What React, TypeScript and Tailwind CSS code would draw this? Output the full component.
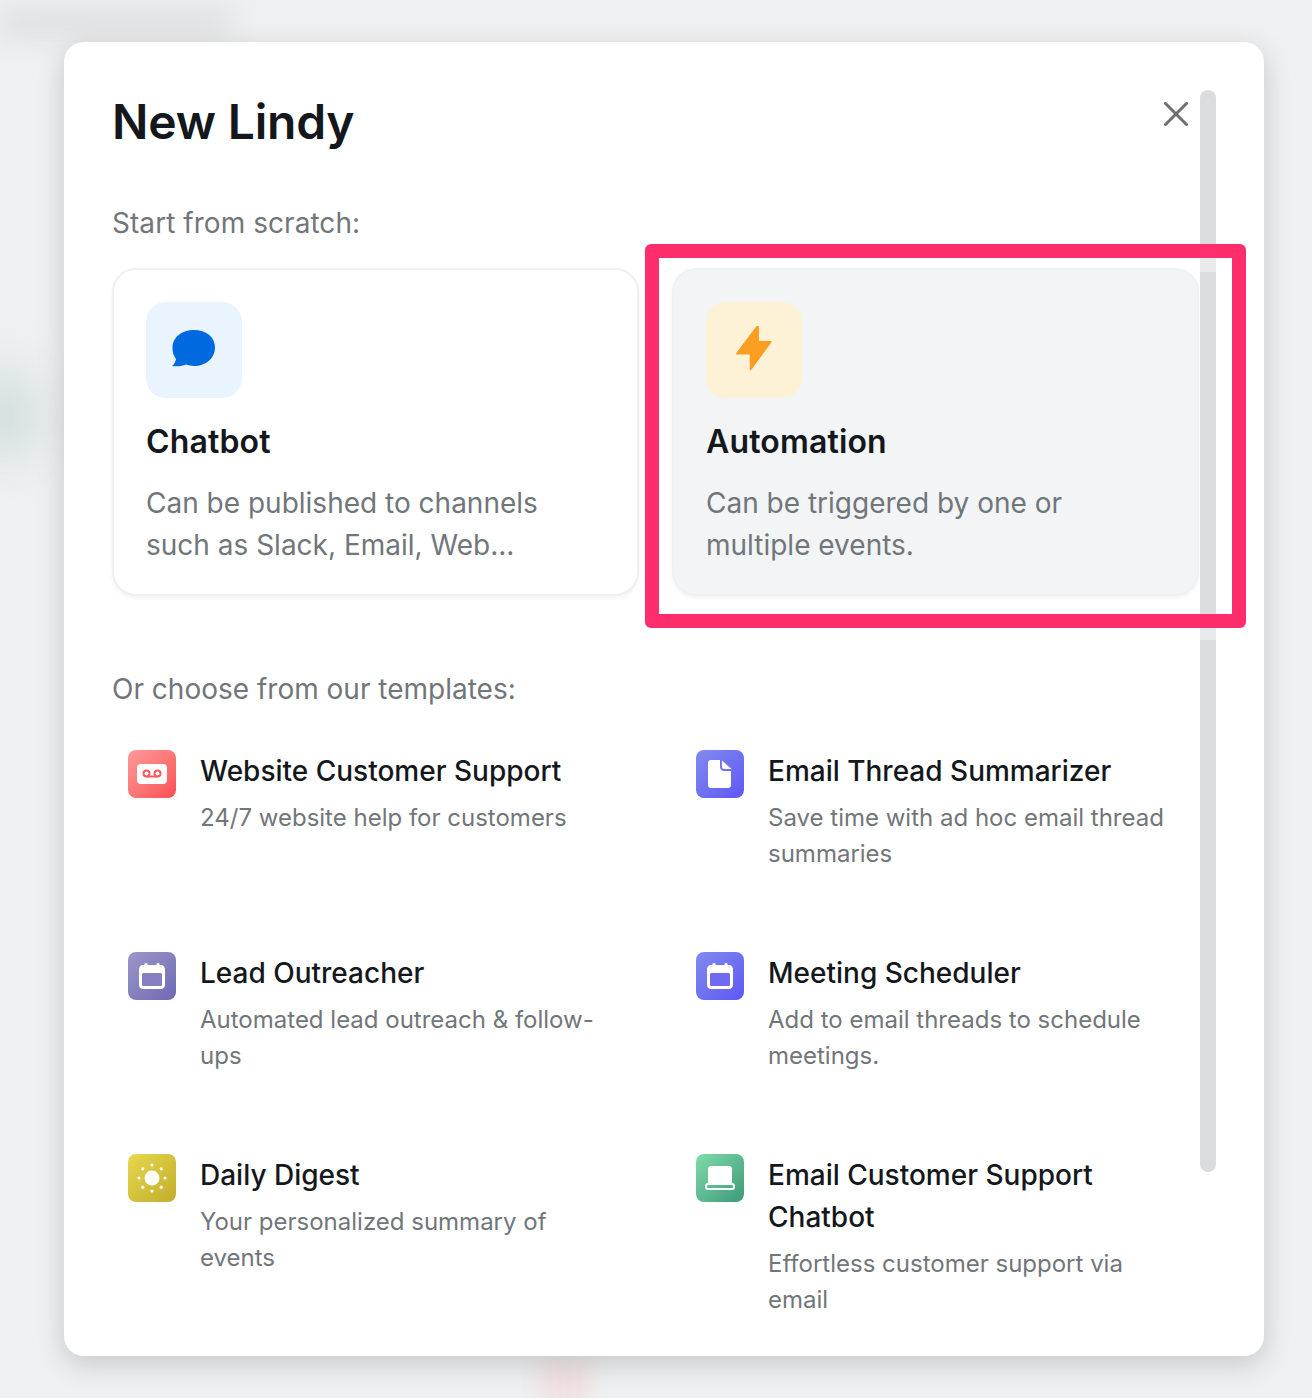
const labelCls = "text-[28px] leading-[42px] text-[#71767a]";
const cardTitleCls = "mt-[22px] text-[32px] font-semibold leading-[44px] tracking-[0.15px] text-[#14181c]";
const iconBoxCls = "flex h-[96px] w-[96px] items-center justify-center rounded-[20px] pb-[4px]";

function VoicemailIcon() {
  return (
    <svg width="30" height="20" viewBox="0 0 30 20">
      <rect width="30" height="20" rx="4" fill="#fff" />
      <g fill="none" stroke="#f8595f" strokeWidth="2">
        <circle cx="9.500" cy="9.500" r="3" />
        <circle cx="20.500" cy="9.500" r="3" />
        <path d="M9.500 12.500h11" />
      </g>
    </svg>
  );
}

function FileIcon() {
  return (
    <svg width="24" height="28" viewBox="0 0 24 28">
      <path d="M3 0h9v7c0 2.200 1.800 4 4 4h7v14c0 1.700-1.300 3-3 3H3c-1.700 0-3-1.300-3-3V3c0-1.700 1.300-3 3-3z" fill="#fff" />
      <path d="M14 .5 23.500 9H16c-1.100 0-2-.9-2-2z" fill="#fff" />
    </svg>
  );
}

function CalendarIcon({ inner }: { inner: string }) {
  return (
    <svg width="26" height="26" viewBox="0 0 26 26">
      <path d="M7 0c1 0 1.500.6 1.700 2h8.600C17.500.6 18 0 19 0s1.500.6 1.700 2H22c2.200 0 4 1.800 4 4v16c0 2.200-1.800 4-4 4H4c-2.200 0-4-1.800-4-4V6c0-2.200 1.800-4 4-4h1.300C5.500.6 6 0 7 0z" fill="#fff" />
      <rect x="3" y="10" width="20" height="13" rx="1.500" fill={inner} />
    </svg>
  );
}

function SunIcon() {
  return (
    <svg width="32" height="32" viewBox="0 0 32 32" fill="#fff">
      <circle cx="16" cy="16" r="7.500" />
      <circle cx="16" cy="3" r="1.600" />
      <circle cx="16" cy="29" r="1.600" />
      <circle cx="3" cy="16" r="1.600" />
      <circle cx="29" cy="16" r="1.600" />
      <circle cx="6.800" cy="6.800" r="1.600" />
      <circle cx="25.200" cy="6.800" r="1.600" />
      <circle cx="6.800" cy="25.200" r="1.600" />
      <circle cx="25.200" cy="25.200" r="1.600" />
    </svg>
  );
}

function LaptopIcon() {
  return (
    <svg width="30" height="24" viewBox="0 0 30 24">
      <path d="M6 0h18c1.700 0 3 1.300 3 3v14H3V3c0-1.700 1.300-3 3-3z" fill="#fff" />
      <rect x="1" y="18" width="28" height="5" rx="2" fill="none" stroke="#fff" strokeWidth="2" />
    </svg>
  );
}

const templates = [
  {
    title: "Website Customer Support",
    desc: "24/7 website help for customers",
    bg: "bg-gradient-to-br from-[#fb9a9a] to-[#fa4d52]",
    icon: <VoicemailIcon />,
  },
  {
    title: "Email Thread Summarizer",
    desc: "Save time with ad hoc email thread summaries",
    bg: "bg-gradient-to-br from-[#8389ee] to-[#5f56f5]",
    icon: <FileIcon />,
  },
  {
    title: "Lead Outreacher",
    desc: "Automated lead outreach & follow-ups",
    bg: "bg-gradient-to-br from-[#9b98c9] to-[#6f69b3]",
    icon: <CalendarIcon inner="#8680c0" />,
  },
  {
    title: "Meeting Scheduler",
    desc: "Add to email threads to schedule meetings.",
    bg: "bg-gradient-to-br from-[#8389ee] to-[#5f56f5]",
    icon: <CalendarIcon inner="#6f6aef" />,
  },
  {
    title: "Daily Digest",
    desc: "Your personalized summary of events",
    bg: "bg-gradient-to-br from-[#e6d84e] to-[#c2ad2a]",
    icon: <SunIcon />,
  },
  {
    title: "Email Customer Support Chatbot",
    desc: "Effortless customer support via email",
    bg: "bg-gradient-to-br from-[#7fdcaa] to-[#3c9a78]",
    icon: <LaptopIcon />,
  },
];

export default function App() {
  return (
    <div className="relative flex h-[1398px] items-start overflow-hidden bg-[#eef0f1] pl-[64px] pt-[42px] font-['Inter',sans-serif]">
      {/* blurred page behind the modal */}
      <div className="absolute left-[0px] top-[10px] h-[26px] w-[230px] rounded bg-[#dcdee0] blur-[14px]" />
      <div className="absolute left-[-30px] top-[370px] h-[90px] w-[70px] rounded-full bg-[#d3e1de] blur-[20px]" />
      <div className="absolute left-[540px] top-[1362px] h-[40px] w-[50px] bg-[#f0dfe0] blur-[10px]" />

      <div className="relative flex h-[1314px] w-[1200px] shrink-0 overflow-hidden rounded-[20px] bg-white px-[48px] shadow-[0_8px_28px_rgba(0,0,0,0.17)]">
        <div className="w-[1088px] pt-[49px]">
          <div className="flex items-start justify-between pr-[12px]">
            <h1 className="text-[48px] font-semibold leading-[62px] tracking-[-0.2px] text-[#14181c]">New Lindy</h1>
            <svg className="mt-[11px]" width="24" height="24" viewBox="0 0 24 24" fill="none" stroke="#6d7073" strokeWidth="3" strokeLinecap="round">
              <path d="M1.500 1.500 22.500 22.500M22.500 1.500 1.500 22.500" />
            </svg>
          </div>

          <p className={`mt-[49px] tracking-[0.05px] ${labelCls}`}>Start from scratch:</p>

          <div className="mt-[24px] grid w-[1087px] grid-cols-2 gap-[33px]">
            <div className="h-[328px] rounded-[24px] border-2 border-[#eff0f1] bg-white px-[32px] pt-[32px] shadow-[0_2px_4px_rgba(0,0,0,0.05)]">
              <div className={`${iconBoxCls} bg-[#e9f4fe]`}>
                <svg width="44" height="37" viewBox="0 0 44 37">
                  <path d="M22 0C34 0 43 7 43 17.500 43 28 34 36 22 36c-3 0-5.500-.5-8-1.400C10 36.500 5 36.600 0 36c2.500-2 3.500-4.500 4-7-2.500-3-3.500-7-3.500-11C.5 7 10 0 22 0z" fill="#0069e0" />
                </svg>
              </div>
              <div className={cardTitleCls}>Chatbot</div>
              <div className={`mt-[18px] ${labelCls}`}>
                Can be published to channels
                <br />
                such as Slack, Email, Web...
              </div>
            </div>
            <div className="h-[328px] rounded-[24px] border-2 border-[#eff1f2] bg-[#f2f4f5] px-[32px] pt-[32px] shadow-[0_2px_4px_rgba(0,0,0,0.05)]">
              <div className={`${iconBoxCls} bg-[#fef2d6]`}>
                <svg width="36" height="46" viewBox="-1 -1 36 46">
                  <path d="M20 1 0 27.500h13.700V43L33.500 16H21V1z" fill="#fc9e21" stroke="#fc9e21" strokeWidth="2" strokeLinejoin="round" />
                </svg>
              </div>
              <div className={cardTitleCls}>Automation</div>
              <div className={`mt-[18px] ${labelCls}`}>
                Can be triggered by one or
                <br />
                multiple events.
              </div>
            </div>
          </div>

          <p className={`mt-[72px] ${labelCls}`}>Or choose from our templates:</p>

          <div className="mt-[40px] grid grid-cols-2 gap-x-[64px] gap-y-[42px] pl-[16px]">
            {templates.map((t) => (
              <div key={t.title} className="flex min-h-[160px] gap-[24px] pr-[27px]">
                <div className={`flex h-[48px] w-[48px] shrink-0 items-center justify-center rounded-[8px] ${t.bg}`}>
                  {t.icon}
                </div>
                <div>
                  <div className="text-[28px] font-medium leading-[42px] text-[#14181c]">{t.title}</div>
                  <div className="mt-[8px] text-[24px] leading-[36px] text-[#71767a]">{t.desc}</div>
                </div>
              </div>
            ))}
          </div>
        </div>

        {/* scrollbar */}
        <div className="mt-[48px] h-[1082px] w-[16px] shrink-0 rounded-full bg-[#dadcde]" />

        {/* highlight drawn over the automation card */}
        <div className="absolute left-[1135px] top-[216px] h-[14px] w-[18px] bg-white/40" />
        <div className="absolute left-[1135px] top-[586px] h-[12px] w-[18px] bg-white/40" />
        <div className="absolute left-[581px] top-[202px] h-[384px] w-[601px] rounded-[6px] border-[14px] border-[#fe2e6c]" />
      </div>
    </div>
  );
}
